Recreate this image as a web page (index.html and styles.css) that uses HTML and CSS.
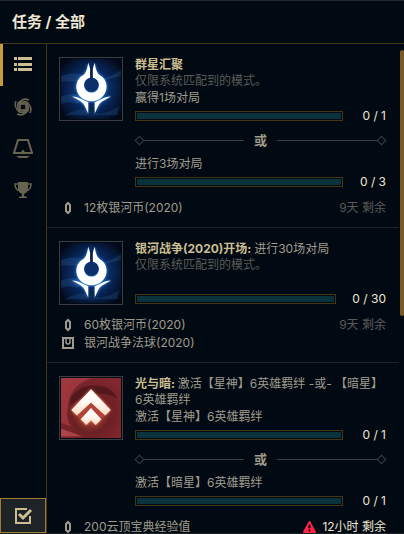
FILE: index.html
```html
<!DOCTYPE html>
<html lang="zh-CN">
<head>
    <meta charset="UTF-8">
    <meta name="viewport" content="width=device-width, initial-scale=1.0">
    <title>任务</title>
    <link rel="stylesheet" href="styles.css">
</head>
<body>
<svg class="sprite" aria-hidden="true">
    <defs>
        <radialGradient id="space" cx="50%" cy="50%" r="64%">
            <stop offset="0" stop-color="#144a94"/>
            <stop offset="0.5" stop-color="#092a62"/>
            <stop offset="1" stop-color="#020817"/>
        </radialGradient>
        <radialGradient id="ember" cx="50%" cy="58%" r="65%">
            <stop offset="0" stop-color="#c4503f"/>
            <stop offset="0.5" stop-color="#6b2024"/>
            <stop offset="1" stop-color="#84272f"/>
        </radialGradient>
        <linearGradient id="flame" x1="0" y1="0" x2="0" y2="1">
            <stop offset="0" stop-color="#ffffff"/>
            <stop offset="0.5" stop-color="#fff8f2"/>
            <stop offset="1" stop-color="#fbd9bd"/>
        </linearGradient>
        <filter id="glow" x="-30%" y="-30%" width="160%" height="160%">
            <feGaussianBlur stdDeviation="1.500"/>
        </filter>
    </defs>
    <symbol id="emblem" viewBox="0 0 64 64">
        <path d="M29 4C28 11 27 14 24 17C14 22 14 36 23 42C29 46 36 46 42 42C51 36 51 22 41 17C38 14 37 11 36 4L34 10V20A8 8 0 1 1 31 20V10Z"/>
        <path d="M12 40C18 40 23 44 29 46V58C27 54 26 51 24 48C21 44 16 43 12 40ZM53 40C47 40 42 44 36 46V58C38 54 39 51 41 48C44 44 49 43 53 40Z"/>
    </symbol>
    <symbol id="cosmic" viewBox="0 0 64 64">
        <rect width="64" height="64" fill="url(#space)"/>
        <path d="M0 18Q18 12 28 20T64 12V18Q45 24 30 24T0 24ZM0 40Q14 34 26 40L18 48Q10 44 0 48Z" fill="#4388c8" opacity="0.2"/>
        <path d="M4 60Q20 50 32 56T62 50L60 60Z" fill="#2c6cae" opacity="0.25"/>
        <circle cx="51" cy="51" r="1.500" fill="#07173d"/>
        <circle cx="54" cy="16" r="1" fill="#07173d"/>
        <use href="#emblem" fill="#3b9cf0" filter="url(#glow)"/>
        <path d="M31 2H34V22H31Z" fill="#0b2450"/>
        <circle cx="32.500" cy="27.500" r="7.500" fill="#0d2f68"/>
        <path d="M30 47H35V62H30Z" fill="#0b2450" opacity="0.7"/>
        <use href="#emblem" fill="#ffffff"/>
    </symbol>
    <symbol id="chevrons" viewBox="0 0 64 64">
        <path d="M32 12L53 34L47 40L32 26L17 40L11 34Z"/>
        <path d="M32 32L43 44L37 50L32 45L27 50L21 44Z"/>
    </symbol>
    <symbol id="duality" viewBox="0 0 64 64">
        <rect width="64" height="64" fill="url(#ember)"/>
        <path d="M0 0H34Q12 6 8 26T12 52L0 48Z" fill="#b8434a" opacity="0.55"/>
        <path d="M0 54Q12 58 22 62H0Z" fill="#c4525a" opacity="0.7"/>
        <path d="M10 22Q18 8 36 8T60 22Q50 16 38 17T10 28Z" fill="#3f1215" opacity="0.6"/>
        <use href="#chevrons" fill="#ff8a6a" filter="url(#glow)"/>
        <path d="M32 26L47 40L43 44L32 32L21 44L17 40Z" fill="#b04438"/>
        <use href="#chevrons" fill="url(#flame)"/>
    </symbol>
    <symbol id="token" viewBox="0 0 14 14">
        <path d="M7 2L9 4V10L7 12L5 10V4Z" fill="none" stroke="currentColor" stroke-width="2"/>
    </symbol>
    <symbol id="orb" viewBox="0 0 14 14">
        <path d="M2 2H12V12H2Z" fill="none" stroke="currentColor" stroke-width="2"/>
        <path d="M5 3V6Q5 8 7 8T9 6V3" fill="none" stroke="currentColor" stroke-width="1.500"/>
    </symbol>
</svg>

<header class="page-header">
    <h1>任务 / 全部</h1>
</header>

<div class="page">
    <nav class="sidebar">
        <button class="tab active" aria-label="全部">
            <svg width="20" height="20" viewBox="0 0 20 20" fill="currentColor">
                <path d="M1 2H4V5H1ZM5 2H19V5H5ZM1 8H4V11H1ZM5 8H19V11H5ZM1 13H4V16H1ZM5 13H19V16H5Z"/>
            </svg>
        </button>
        <button class="tab" aria-label="活动">
            <svg width="20" height="20" viewBox="0 0 20 20" fill="none" stroke="currentColor" stroke-width="1.500">
                <path d="M7 7H13V13H7Z"/>
                <g id="blade">
                    <path d="M7 12C4 6 9 0 16 3"/>
                    <path d="M7 7C9 4 14 3 16 8"/>
                </g>
                <use href="#blade" transform="rotate(90 10 10)"/>
                <use href="#blade" transform="rotate(180 10 10)"/>
                <use href="#blade" transform="rotate(270 10 10)"/>
            </svg>
        </button>
        <button class="tab" aria-label="云顶之弈">
            <svg width="20" height="20" viewBox="0 0 20 20" fill="none" stroke="currentColor" stroke-width="2">
                <path d="M7 1H5L1 14H19L15 1H13M7 1H13"/>
                <path d="M8 14L10 11L12 14Z" fill="currentColor" stroke-width="1"/>
                <path d="M3 17H17L14 19H6Z" fill="currentColor" stroke="none"/>
            </svg>
        </button>
        <button class="tab" aria-label="赛事">
            <svg width="20" height="20" viewBox="0 0 20 20">
                <path d="M5 1H15V8Q14 12 11 13V15L14 16V17H6V16L9 15V13Q6 12 5 8Z" fill="currentColor"/>
                <path d="M6 3H2Q2 9 7 10M14 3H18Q18 9 13 10" fill="none" stroke="currentColor" stroke-width="1.500"/>
            </svg>
        </button>
        <button class="tab-done" aria-label="已完成">
            <svg width="18" height="18" viewBox="0 0 18 18" fill="none" stroke="currentColor" stroke-width="2">
                <path d="M13 2H2V16H16V9"/>
                <path d="M5 7L9 11L17 3" stroke-width="3"/>
            </svg>
        </button>
    </nav>

    <main class="quests">
        <article class="quest">
            <div class="quest-top">
                <svg class="quest-icon"><use href="#cosmic"/></svg>
                <div class="quest-body">
                    <h2>群星汇聚</h2>
                    <p class="note">仅限系统匹配到的模式。</p>
                    <p class="goal">赢得1场对局</p>
                    <div class="progress"><div class="bar"></div><span class="count">0 / 1</span></div>
                    <div class="or"><i></i><span>或</span><i></i></div>
                    <p class="goal">进行3场对局</p>
                    <div class="progress"><div class="bar"></div><span class="count">0 / 3</span></div>
                </div>
            </div>
            <div class="quest-bottom">
                <ul>
                    <li><svg><use href="#token"/></svg>12枚银河币(2020)</li>
                </ul>
                <span class="time">9天 剩余</span>
            </div>
        </article>

        <article class="quest">
            <div class="quest-top">
                <svg class="quest-icon"><use href="#cosmic"/></svg>
                <div class="quest-body">
                    <h2>银河战争(2020)开场: <span>进行30场对局</span></h2>
                    <p class="note">仅限系统匹配到的模式。</p>
                    <div class="progress single"><div class="bar"></div><span class="count">0 / 30</span></div>
                </div>
            </div>
            <div class="quest-bottom">
                <ul>
                    <li><svg><use href="#token"/></svg>60枚银河币(2020)</li>
                    <li><svg><use href="#orb"/></svg>银河战争法球(2020)</li>
                </ul>
                <span class="time">9天 剩余</span>
            </div>
        </article>

        <article class="quest">
            <div class="quest-top">
                <svg class="quest-icon"><use href="#duality"/></svg>
                <div class="quest-body">
                    <h2>光与暗: <span>激活【星神】6英雄羁绊 -或- 【暗星】6英雄羁绊</span></h2>
                    <p class="goal">激活【星神】6英雄羁绊</p>
                    <div class="progress"><div class="bar"></div><span class="count">0 / 1</span></div>
                    <div class="or"><i></i><span>或</span><i></i></div>
                    <p class="goal">激活【暗星】6英雄羁绊</p>
                    <div class="progress"><div class="bar"></div><span class="count">0 / 1</span></div>
                </div>
            </div>
            <div class="quest-bottom">
                <ul>
                    <li><svg><use href="#token"/></svg>200云顶宝典经验值</li>
                </ul>
                <span class="time urgent">
                    <svg width="13" height="12" viewBox="0 0 13 12">
                        <path d="M6.500 1L12 11H1Z" fill="#ff2345" stroke="#ff2345" stroke-width="2" stroke-linejoin="round"/>
                        <path d="M6 4H7V7H6ZM6 9H7V10H6Z" fill="#010a13" stroke="#010a13"/>
                    </svg>
                    12小时 剩余
                </span>
            </div>
        </article>
    </main>
    <div class="scroll-rail"><div class="scroll-thumb"></div></div>
</div>
</body>
</html>
```

FILE: styles.css
```css
* {
    box-sizing: border-box;
    margin: 0;
    padding: 0;
}

body {
    display: flex;
    flex-direction: column;
    height: 100vh;
    overflow: hidden;
    background-color: #010a13;
    color: #a09b8c;
    border-top: 1px solid #1e282d;
    border-bottom: 1px solid #1e2328;
    font-family: Inter, "Noto Sans CJK SC", sans-serif;
    font-size: 12px;
    line-height: 18px;
}

.sprite {
    position: absolute;
    width: 0;
    height: 0;
}

.page-header {
    padding: 12px;
    border-bottom: 1px solid #463714;
}

.page-header h1 {
    color: #f0e6d2;
    font-size: 15px;
    line-height: 18px;
}

.page {
    display: flex;
    flex: 1;
    min-height: 0;
}

.sidebar {
    display: flex;
    flex-direction: column;
    width: 47px;
    border-right: 1px solid #463714;
}

.tab {
    display: flex;
    align-items: center;
    justify-content: center;
    height: 42px;
    border: none;
    border-left: 3px solid transparent;
    border-right: 3px solid transparent;
    background: none;
    color: #686350;
}

.tab.active {
    border-left-color: #c89b3c;
    color: #cdbe91;
}

.tab-done {
    display: flex;
    align-items: center;
    justify-content: center;
    height: 35px;
    margin-top: auto;
    border: 1px solid #a07b32;
    background-color: #1e2328;
    color: #cdbe91;
}

.quests {
    flex: 1;
    overflow: hidden;
}

.quest {
    padding: 13px 13px 10px 12px;
    border-bottom: 1px solid #1e2328;
}

.quest-top {
    display: flex;
    gap: 12px;
}

.quest-icon {
    flex: none;
    width: 64px;
    height: 64px;
    padding: 1px;
    border: 1px solid #3c3c41;
    background-color: #010a13;
}

.quest-body {
    flex: 1;
}

.quest h2 {
    color: #cdbe91;
    font-size: 12px;
    line-height: 16px;
}

.quest h2 span {
    color: #a09b8c;
    font-weight: normal;
}

.note {
    color: #5b5a56;
    line-height: 16px;
}

.progress {
    display: flex;
    align-items: center;
    height: 18px;
}

.progress.single {
    margin-top: 17px;
}

.bar {
    flex: 1;
    height: 10px;
    padding: 1px;
    border: 1px solid #463714;
    background: #0a323c content-box;
}

.count {
    min-width: 43px;
    padding-left: 16px;
    color: #f0e6d2;
    text-align: right;
}

.or {
    display: flex;
    align-items: center;
    height: 30px;
    font-size: 13px;
    font-weight: bold;
}

.or span {
    padding: 0 10px;
}

/* line with a small diamond on its outer end */
.or i {
    display: flex;
    align-items: center;
    flex: 1;
}

.or i:last-child {
    flex-direction: row-reverse;
}

.or i::before {
    content: "";
    width: 5px;
    height: 5px;
    margin: 0 1px;
    border: 1px solid #3c3c41;
    transform: rotate(45deg);
}

.or i::after {
    content: "";
    flex: 1;
    height: 1px;
    background-color: #3c3c41;
}

.quest-bottom {
    display: flex;
    justify-content: space-between;
    margin-top: 8px;
}

.quest-bottom ul {
    list-style-type: none;
}

.quest-bottom li {
    display: flex;
    align-items: center;
    gap: 9px;
}

.quest-bottom li svg {
    width: 14px;
    height: 14px;
    margin-left: 2px;
}

.time {
    color: #5b5a56;
}

.urgent {
    display: flex;
    align-items: center;
    gap: 6px;
    height: 18px;
    color: #f0e6d2;
}

.scroll-rail {
    width: 5px;
    padding: 6px 0 0 1px;
}

.scroll-thumb {
    height: 55%;
    border-radius: 2px;
    background-color: #785a28;
}
```
